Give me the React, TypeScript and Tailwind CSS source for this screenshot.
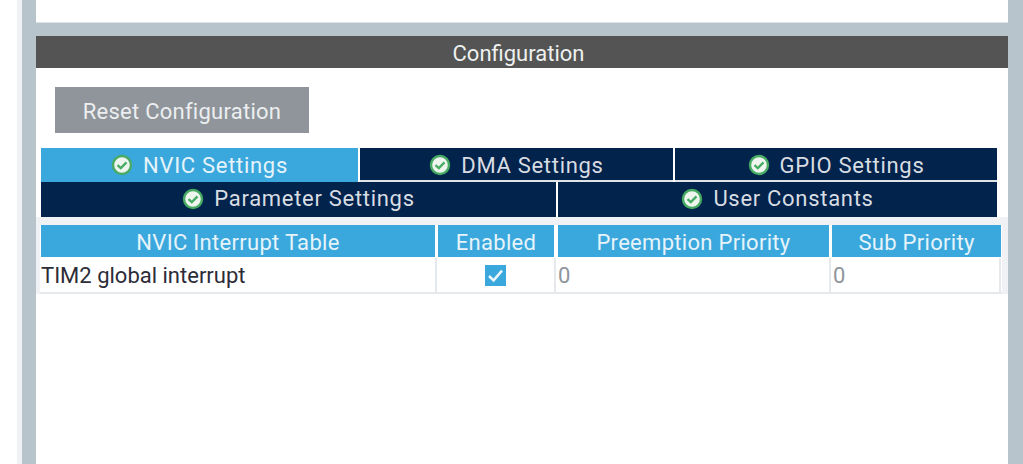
const font = "font-['Roboto',sans-serif]";

function OkIcon() {
  return (
    <svg width="22" height="22" viewBox="0 0 22 22" className="shrink-0">
      <circle cx="11" cy="11" r="9" fill="#eef5ee" stroke="#47ab63" strokeWidth="2.4" />
      <path d="M6.5 11.1 L9.8 14.1 L15.5 8.4" fill="none" stroke="#47ab63" strokeWidth="2.3" />
    </svg>
  );
}

function Tab({ label, className }: { label: string; className: string }) {
  return (
    <div
      className={`${className} flex h-full items-center justify-center gap-[10px] text-[22px] tracking-[0.7px]`}
    >
      <OkIcon />
      <span>{label}</span>
    </div>
  );
}

const dark = "bg-[#02234b] text-[#d8dde3]";
const top = "border-b-2 border-[#dfe4e8] pt-[2px]";

export default function App() {
  return (
    <div className={`${font} flex h-[464px] w-[1023px] overflow-hidden bg-white`}>
      <div className="w-[17px] shrink-0 bg-white" />
      <div className="w-[5px] shrink-0 bg-[#f0f1f4]" />
      <div className="w-[14px] shrink-0 bg-[#b8c4cb]" />

      <div className="flex w-[972px] shrink-0 flex-col">
        <div className="h-[23px] shrink-0 border-b border-[#dfe3e6] bg-white" />
        <div className="h-[13px] shrink-0 bg-[#b8c4cb]" />
        <div className="flex h-[32px] shrink-0 items-center justify-center bg-[#535453] pt-[3px] text-[22px] text-[#eef0f0]">
          <span className="-ml-[7px]">Configuration</span>
        </div>

        <div className="flex-1 bg-white">
          <div className="pl-[19px] pt-[19px]">
            <div className="flex h-[46px] w-[254px] items-center justify-center bg-[#8f959b] pt-[2px] text-[22px] tracking-[0.25px] text-[#eceef0]">
              Reset Configuration
            </div>
          </div>

          <div className="ml-[5px] mt-[15px] flex h-[34px] w-[956px] gap-[2px]">
            <Tab label="NVIC Settings" className="w-[317px] bg-[#3aa8dc] text-[#e6f3fa]" />
            <Tab label="DMA Settings" className={`w-[313px] ${dark} ${top}`} />
            <Tab label="GPIO Settings" className={`w-[322px] ${dark} ${top}`} />
          </div>
          <div className="ml-[5px] flex h-[35px] w-[956px] gap-[2px]">
            <Tab label="Parameter Settings" className={`w-[515px] pb-[2px] ${dark}`} />
            <Tab label="User Constants" className={`w-[439px] pb-[2px] ${dark}`} />
          </div>

          <div className="h-[8px] bg-[#f0f1f4]" />
          <div className="flex">
            <div className="w-[4px] shrink-0 bg-[#f0f1f4]" />
            <div className="w-[962px]">
              <div className="ml-[1px] flex h-[32px] gap-[3px] text-[22px] tracking-[0.3px] text-[#e6f3fa]">
                <div className="flex h-full w-[394px] items-center justify-center bg-[#3aa8dc] pt-[3px]">NVIC Interrupt Table</div>
                <div className="flex h-full w-[116px] items-center justify-center bg-[#3aa8dc] pt-[3px]">Enabled</div>
                <div className="ml-[1px] flex h-full w-[271px] items-center justify-center bg-[#3aa8dc] pt-[3px]">Preemption Priority</div>
                <div className="flex h-full w-[169px] items-center justify-center bg-[#3aa8dc] pt-[3px]">Sub Priority</div>
              </div>
              <div className="mt-[1px] flex h-[36px] items-center border-b-2 border-[#e6e9ec] text-[22px]">
                <div className="flex h-full w-[397px] items-center border-r-2 border-[#e6e9ec] pl-[1px] pt-[1px] text-[#2c2c38]">TIM2 global interrupt</div>
                <div className="flex h-full w-[119px] items-center justify-center border-r-2 border-[#e6e9ec]">
                  <div className="flex h-[21px] w-[21px] items-center justify-center bg-[#3aa8dc]">
                    <svg width="19" height="19" viewBox="0 0 19 19">
                      <path d="M3 10 L7.6 14.4 L16 4.6" fill="none" stroke="#eaf6fc" strokeWidth="2.6" />
                    </svg>
                  </div>
                </div>
                <div className="flex h-full w-[275px] items-center border-r-2 border-[#e6e9ec] pl-[2px] pt-[1px] text-[#8f959b]">0</div>
                <div className="flex h-full w-[170px] items-center border-r-2 border-[#e6e9ec] pl-[2px] pt-[1px] text-[#8f959b]">0</div>
              </div>
            </div>
            <div className="flex-1 bg-[#f0f1f4]" />
          </div>
        </div>
      </div>

      <div className="flex-1 bg-[#b8c4cb]" />
    </div>
  );
}
